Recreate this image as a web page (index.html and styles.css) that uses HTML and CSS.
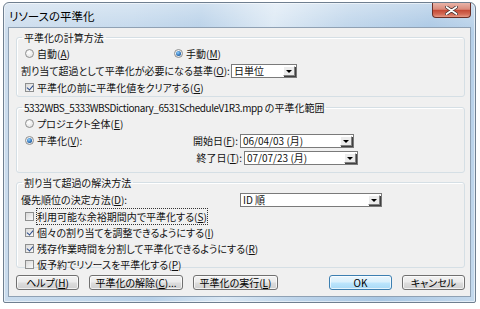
FILE: index.html
```html
<!DOCTYPE html>
<html lang="ja">
<head>
<meta charset="utf-8">
<link rel="stylesheet" href="styles.css">
</head>
<body>
<div class="window">
  <div class="titlebar">
    <span class="title">リソースの平準化</span>
    <div class="close">
      <svg width="13" height="9" viewBox="0 0 13 9"><path d="M1.5 1 L11.5 8 M11.5 1 L1.5 8" stroke="#3a2a2a" stroke-width="3.2" stroke-linecap="round"/><path d="M1.5 1 L11.5 8 M11.5 1 L1.5 8" stroke="#fff" stroke-width="1.8" stroke-linecap="round"/></svg>
    </div>
  </div>
  <div class="client">
    <fieldset class="group g1">
      <legend>平準化の計算方法</legend>
      <div class="row r17">
        <label class="opt opt-auto"><span class="radio"></span>自動(<u>A</u>)</label>
        <label class="opt"><span class="radio on"></span>手動(<u>M</u>)</label>
      </div>
      <div class="row r17">
        <span class="lbl lbl-base">割り当て超過として平準化が必要になる基準(<u>O</u>):</span>
        <div class="combo c-unit"><span class="val">日単位</span><span class="drop"></span></div>
      </div>
      <div class="row r17">
        <label class="opt"><span class="check on"></span>平準化の前に平準化値をクリアする(<u>G</u>)</label>
      </div>
    </fieldset>

    <fieldset class="group g2">
      <legend><span class="latin">5332WBS_5333WBSDictionary_6531ScheduleV1R3.mpp</span> の平準化範囲</legend>
      <div class="row r17">
        <label class="opt"><span class="radio"></span>プロジェクト全体(<u>E</u>)</label>
      </div>
      <div class="row r17">
        <label class="opt opt-range"><span class="radio on"></span>平準化(<u>V</u>):</label>
        <span class="lbl date-lbl">開始日(<u>F</u>):</span>
        <div class="combo c-date"><span class="val">06/04/03 (月)</span><span class="drop"></span></div>
      </div>
      <div class="row r17">
        <span class="lbl date-lbl date-lbl-only">終了日(<u>T</u>):</span>
        <div class="combo c-date"><span class="val">07/07/23 (月)</span><span class="drop"></span></div>
      </div>
    </fieldset>

    <fieldset class="group g3">
      <legend>割り当て超過の解決方法</legend>
      <div class="row r17">
        <span class="lbl lbl-prio">優先順位の決定方法(<u>D</u>):</span>
        <div class="combo c-prio"><span class="val">ID 順</span><span class="drop"></span></div>
      </div>
      <div class="row r16">
        <label class="opt"><span class="check"></span><span class="focus">利用可能な余裕期間内で平準化する(<u>S</u>)</span></label>
      </div>
      <div class="row r16">
        <label class="opt"><span class="check on"></span>個々の割り当てを調整できるようにする(<u>I</u>)</label>
      </div>
      <div class="row r16">
        <label class="opt"><span class="check on"></span>残存作業時間を分割して平準化できるようにする(<u>R</u>)</label>
      </div>
      <div class="row r16">
        <label class="opt"><span class="check"></span>仮予約でリソースを平準化する(<u>P</u>)</label>
      </div>
    </fieldset>

    <div class="buttons">
      <button class="btn b-help">ヘルプ(<u>H</u>)</button>
      <button class="btn b-clear">平準化の解除(<u>C</u>)...</button>
      <button class="btn b-run">平準化の実行(<u>L</u>)</button>
      <span class="spacer"></span>
      <button class="btn btn-default b-ok">OK</button>
      <button class="btn b-cancel">キャンセル</button>
    </div>
  </div>
</div>
</body>
</html>
```
FILE: styles.css
```css
* { box-sizing: border-box; }
html, body { margin: 0; padding: 0; background: #ffffff; }
body {
  width: 480px;
  height: 309px;
  overflow: hidden;
  font-family: "Noto Sans CJK JP", "Noto Sans", sans-serif;
  font-size: 10px;
  font-feature-settings: "palt";
  color: #111;
}
u { text-decoration: underline; text-underline-offset: 1px; }

.window {
  margin: 2px 0 0 3px;
  width: 473px;
  height: 301px;
  border: 1px solid #6f7f90;
  border-radius: 6px 6px 2px 2px;
  padding: 0 4px 5px 4px;
  display: flex;
  flex-direction: column;
  background:
    linear-gradient(to bottom, rgba(255,255,255,0.35), rgba(255,255,255,0) 30px),
    linear-gradient(100deg, #cddded 0%, #c3d8ec 25%, #b7d0e8 38%, #dbe8f4 52%, #bdd4ea 66%, #a9c7e4 82%, #c4d9ed 100%);
  box-shadow: inset 0 0 0 1px rgba(255,255,255,0.55);
}
.titlebar {
  height: 24px;
  flex: none;
  display: flex;
  align-items: flex-start;
  justify-content: space-between;
}
.title {
  margin: 6px 0 0 1px;
  font-size: 11.5px;
  line-height: 14px;
  color: #000;
}
.close {
  width: 39px;
  height: 15px;
  border: 1px solid #6b2f27;
  border-top: none;
  border-radius: 0 0 4px 4px;
  background: linear-gradient(to bottom, #e8b3a8 0%, #d98a7b 45%, #c54a36 52%, #d36a55 80%, #e79a86 100%);
  display: flex;
  align-items: center;
  justify-content: center;
}

.client {
  flex: 1;
  background: #f0f0f0;
  border: 1px solid #8fa1b4;
  padding: 4px 5px 0 7px;
  display: flex;
  flex-direction: column;
}

.group {
  margin: 0;
  padding: 0 0 0 4px;
  border: 1px solid #d5dfe5;
  border-radius: 3px;
  box-shadow: inset 1px 1px 0 #fff;
  min-width: 0;
}
.group legend {
  padding: 0 2px;
  margin-left: 1px;
  line-height: 11px;
  height: 11px;
  white-space: nowrap;
}
.latin { letter-spacing: -0.45px; }
.g1 { height: 65px; padding-top: 2px; }
.g2 { height: 71px; margin-top: 5px; padding-top: 2px; }
.g3 { height: 91px; margin-top: 4px; padding-top: 3px; }

.row { display: flex; align-items: center; white-space: nowrap; }
.r17 { height: 17px; }
.r16 { height: 16px; }

.opt { display: flex; align-items: center; padding-left: 4px; }
.opt-auto { width: 149px; }
.opt-range { width: 164px; }

.radio {
  width: 9px; height: 9px;
  border: 1px solid #8e8f8f;
  border-radius: 50%;
  background: radial-gradient(circle at 40% 35%, #ffffff, #dcdcdc);
  margin-right: 3px;
  display: flex; align-items: center; justify-content: center;
}
.radio.on::after {
  content: "";
  width: 5px; height: 5px;
  border-radius: 50%;
  background: radial-gradient(circle at 40% 35%, #8fd0ff, #1d5fa8 70%);
}
.check {
  width: 9px; height: 9px;
  border: 1px solid #8e8f8f;
  background: linear-gradient(135deg, #d9d9d9, #fafafa);
  margin-right: 3px;
  position: relative;
}
.check.on::after {
  content: "";
  position: absolute;
  left: 2px; top: 0px;
  width: 3px; height: 5px;
  border: solid #2a4a8a;
  border-width: 0 1.5px 1.5px 0;
  transform: rotate(40deg);
}
.focus { outline: 1px dotted #333; outline-offset: 0px; }

.lbl-base { width: 210px; }
.lbl-prio { width: 219px; }
.date-lbl { width: 55px; text-align: right; padding-right: 2px; }
.date-lbl-only { margin-left: 168px; }

.combo {
  height: 14px;
  border: 1px solid #7a7a7a;
  background: #fff;
  display: flex;
  align-items: center;
  justify-content: space-between;
  padding: 0 1px 0 2px;
}
.combo .val { line-height: 12px; }
.drop {
  width: 12px; height: 10px;
  background: #ececec;
  border: 1px solid;
  border-color: #fff #808080 #808080 #fff;
  box-shadow: 1px 1px 0 #404040;
  display: flex; align-items: flex-end; justify-content: center;
  padding-bottom: 2px;
}
.drop::after {
  content: "";
  border-left: 3px solid transparent;
  border-right: 3px solid transparent;
  border-top: 3px solid #000;
}
.c-unit { width: 66px; }
.c-date { width: 114px; }
.c-prio { width: 142px; }

.buttons {
  display: flex;
  align-items: center;
  margin-top: 7px;
  padding-left: 0;
  gap: 10px;
}
.spacer { flex: 1; }
.btn {
  height: 15px;
  padding: 0;
  font-family: inherit;
  font-size: 10px;
  font-feature-settings: "palt";
  line-height: 12px;
  color: #000;
  border: 1px solid #707070;
  border-radius: 3px;
  background: linear-gradient(to bottom, #f2f2f2 0%, #ebebeb 48%, #dddddd 52%, #cfcfcf 100%);
  box-shadow: inset 0 0 0 1px rgba(255,255,255,0.7);
}
.btn-default {
  border-color: #3c7fb1;
  background: linear-gradient(to bottom, #eaf6fd 0%, #d9f0fc 48%, #bee6fd 52%, #a7d9f5 100%);
}
.b-help { width: 63px; }
.b-clear { width: 94px; }
.b-run { width: 85px; }
.b-ok { width: 63px; }
.b-cancel { width: 63px; }
```
